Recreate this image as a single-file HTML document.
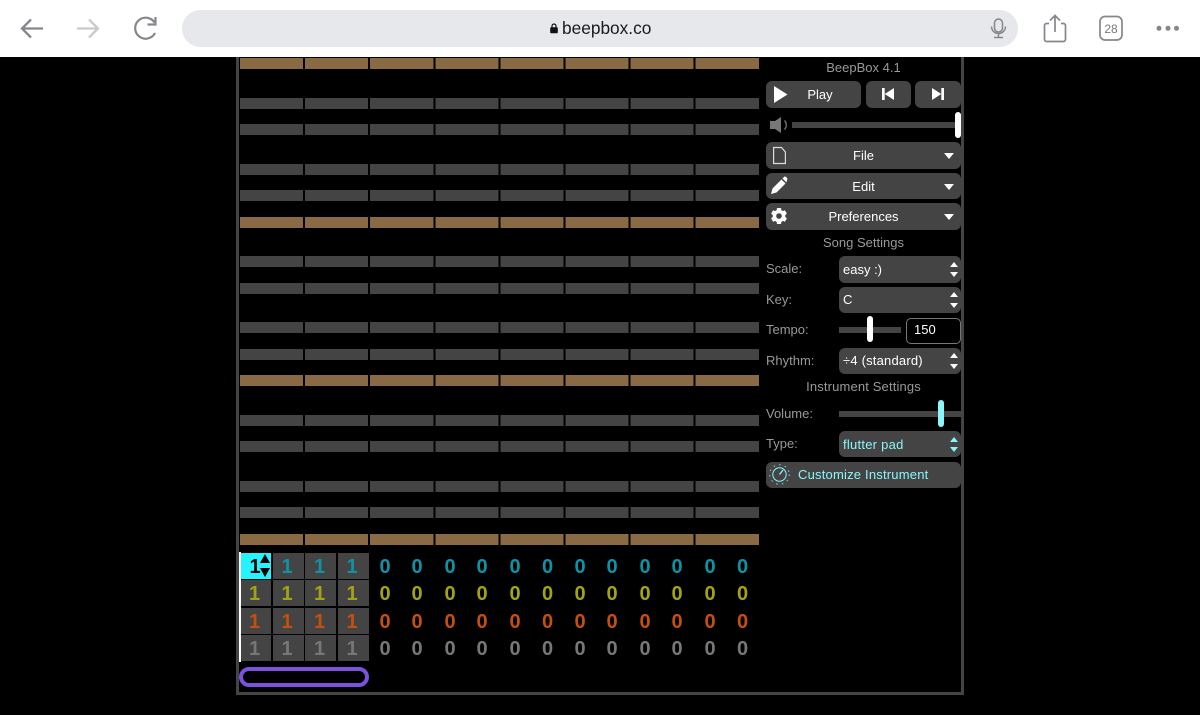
<!DOCTYPE html>
<html><head><meta charset="utf-8">
<style>
html,body{margin:0;padding:0;background:#000;width:1200px;height:715px;overflow:hidden}
body{position:relative;font-family:"Liberation Sans",sans-serif}
div,span,svg{position:absolute;box-sizing:border-box}
.r{left:240px;width:520px;height:11px;background:repeating-linear-gradient(90deg,#444 0 63.1px,#000 63.1px 65.1px)}
.b{background:repeating-linear-gradient(90deg,#8a6a45 0 63.1px,#000 63.1px 65.1px)}
.btn{background:#444;border-radius:6px;height:27px}
.t{color:#fff;font-size:13px;line-height:27px;white-space:nowrap}
.l{color:#999;font-size:13px;line-height:16px;white-space:nowrap}
.h{color:#999;font-size:13px;line-height:16px;text-align:center;left:766px;width:195px}
.tri{width:0;height:0;border-left:5px solid transparent;border-right:5px solid transparent;border-top:6px solid #fff;left:943.500px}
.up{width:0;height:0;border-left:4.500px solid transparent;border-right:4.500px solid transparent;border-bottom:5px solid #fff;left:949.500px}
.dn{width:0;height:0;border-left:4.500px solid transparent;border-right:4.500px solid transparent;border-top:5px solid #fff;left:949.500px}
.c{width:31px;height:26px;background:#444}
.n{width:32px;text-align:center;font-size:20px;font-weight:700;line-height:28px}
.tl{color:#1092a5}.yl{color:#a3a316}.or{color:#c4500f}.gy{color:#777}
</style></head>
<body>
<!-- browser bar -->
<div style="left:0;top:0;width:1200px;height:57px;background:#fff"></div>
<svg style="left:0;top:0" width="1200" height="57" fill="none">
<path d="M43 28.500H22M31 19.500L22 28.500L31 37.500" stroke="#85878b" stroke-width="2.300"/>
<path d="M77 28.500H98M89 19.500L98 28.500L89 37.500" stroke="#c9cacc" stroke-width="2.300"/>
<path d="M154.500 22.500A10.500 10.500 0 1 0 155 33" stroke="#85878b" stroke-width="2.200"/>
<path d="M147.500 24.500H155.500V17" stroke="#85878b" stroke-width="2.200"/>
</svg>
<div style="left:182px;top:10px;width:836px;height:37px;border-radius:18.500px;background:#e7e8ec"></div>
<svg style="left:550px;top:23px" width="8" height="11"><path d="M2 4.500V3a2 2 0 0 1 4 0V4.500" fill="none" stroke="#111" stroke-width="1.200"/><rect x="0.200" y="4.300" width="7.600" height="6" rx="1.100" fill="#111"/></svg>
<div style="left:562px;top:17px;font-size:17.300px;line-height:22px;color:#1a1a1c;white-space:nowrap">beepbox.co</div>
<svg style="left:980px;top:10px" width="210" height="37" fill="none">
<rect x="14.500" y="9" width="8" height="13" rx="4" stroke="#85878b" stroke-width="1.500"/>
<path d="M11.500 16.500a7 7 0 0 0 14 0M18.500 23.500V27M14 27.500H23" stroke="#85878b" stroke-width="1.500"/>
<path d="M69 13.500H66.500a2 2 0 0 0-2 2V29.500a2 2 0 0 0 2 2H83.500a2 2 0 0 0 2-2V15.500a2 2 0 0 0-2-2H81" stroke="#85878b" stroke-width="1.700"/>
<path d="M75 22V6M70 10.500L75 5.500L80 10.500" stroke="#85878b" stroke-width="1.700"/>
<rect x="120" y="6.500" width="22" height="23.500" rx="5" stroke="#85878b" stroke-width="1.700"/>
<circle cx="179" cy="18.300" r="2.500" fill="#85878b"/><circle cx="188" cy="18.300" r="2.500" fill="#85878b"/><circle cx="196.500" cy="18.300" r="2.500" fill="#85878b"/>
</svg>
<div style="left:1100px;top:21px;width:22px;text-align:center;font-size:12px;line-height:16px;color:#77797d">28</div>

<!-- frame -->
<div style="left:236px;top:57px;width:3px;height:638px;background:#444"></div>
<div style="left:961px;top:57px;width:3px;height:638px;background:#444"></div>
<div style="left:236px;top:692px;width:728px;height:3px;background:#444"></div>

<!-- piano roll -->
<div class="r b" style="top:58px"></div>
<div class="r" style="top:98px"></div>
<div class="r" style="top:124px"></div>
<div class="r" style="top:164px"></div>
<div class="r" style="top:190px"></div>
<div class="r b" style="top:217px"></div>
<div class="r" style="top:256px"></div>
<div class="r" style="top:283px"></div>
<div class="r" style="top:322px"></div>
<div class="r" style="top:349px"></div>
<div class="r b" style="top:375px"></div>
<div class="r" style="top:415px"></div>
<div class="r" style="top:441px"></div>
<div class="r" style="top:481px"></div>
<div class="r" style="top:507px"></div>
<div class="r b" style="top:534px"></div>

<!-- channel cells -->
<div style="left:239px;top:552px;width:2px;height:110px;background:#fff"></div>
<div class="c" style="left:241px;top:553px;width:30px;background:#25f3ff"></div><div class="c" style="left:272.500px;top:553px"></div><div class="c" style="left:305px;top:553px"></div><div class="c" style="left:337.500px;top:553px"></div>
<div class="c" style="left:241px;top:580px;width:30px"></div><div class="c" style="left:272.500px;top:580px"></div><div class="c" style="left:305px;top:580px"></div><div class="c" style="left:337.500px;top:580px"></div>
<div class="c" style="left:241px;top:608px;width:30px"></div><div class="c" style="left:272.500px;top:608px"></div><div class="c" style="left:305px;top:608px"></div><div class="c" style="left:337.500px;top:608px"></div>
<div class="c" style="left:241px;top:635px;width:30px"></div><div class="c" style="left:272.500px;top:635px"></div><div class="c" style="left:305px;top:635px"></div><div class="c" style="left:337.500px;top:635px"></div>

<div class="n" style="left:239px;top:553px;color:#000">1</div>
<div style="left:260px;top:554px;width:0;height:0;border-left:5.500px solid transparent;border-right:5.500px solid transparent;border-bottom:9px solid #000"></div>
<div style="left:260px;top:568px;width:0;height:0;border-left:5.500px solid transparent;border-right:5.500px solid transparent;border-top:9px solid #000"></div>

<div class="n tl" style="left:271px;top:553px">1</div><div class="n tl" style="left:303.500px;top:553px">1</div><div class="n tl" style="left:336px;top:553px">1</div>
<div class="n tl" style="left:369px;top:553px">0</div><div class="n tl" style="left:401px;top:553px">0</div><div class="n tl" style="left:434px;top:553px">0</div><div class="n tl" style="left:466px;top:553px">0</div><div class="n tl" style="left:499px;top:553px">0</div><div class="n tl" style="left:531.500px;top:553px">0</div><div class="n tl" style="left:564px;top:553px">0</div><div class="n tl" style="left:596px;top:553px">0</div><div class="n tl" style="left:629px;top:553px">0</div><div class="n tl" style="left:661px;top:553px">0</div><div class="n tl" style="left:694px;top:553px">0</div><div class="n tl" style="left:726.500px;top:553px">0</div>

<div class="n yl" style="left:238.500px;top:580px">1</div><div class="n yl" style="left:271px;top:580px">1</div><div class="n yl" style="left:303.500px;top:580px">1</div><div class="n yl" style="left:336px;top:580px">1</div>
<div class="n yl" style="left:369px;top:580px">0</div><div class="n yl" style="left:401px;top:580px">0</div><div class="n yl" style="left:434px;top:580px">0</div><div class="n yl" style="left:466px;top:580px">0</div><div class="n yl" style="left:499px;top:580px">0</div><div class="n yl" style="left:531.500px;top:580px">0</div><div class="n yl" style="left:564px;top:580px">0</div><div class="n yl" style="left:596px;top:580px">0</div><div class="n yl" style="left:629px;top:580px">0</div><div class="n yl" style="left:661px;top:580px">0</div><div class="n yl" style="left:694px;top:580px">0</div><div class="n yl" style="left:726.500px;top:580px">0</div>

<div class="n or" style="left:238.500px;top:608px">1</div><div class="n or" style="left:271px;top:608px">1</div><div class="n or" style="left:303.500px;top:608px">1</div><div class="n or" style="left:336px;top:608px">1</div>
<div class="n or" style="left:369px;top:608px">0</div><div class="n or" style="left:401px;top:608px">0</div><div class="n or" style="left:434px;top:608px">0</div><div class="n or" style="left:466px;top:608px">0</div><div class="n or" style="left:499px;top:608px">0</div><div class="n or" style="left:531.500px;top:608px">0</div><div class="n or" style="left:564px;top:608px">0</div><div class="n or" style="left:596px;top:608px">0</div><div class="n or" style="left:629px;top:608px">0</div><div class="n or" style="left:661px;top:608px">0</div><div class="n or" style="left:694px;top:608px">0</div><div class="n or" style="left:726.500px;top:608px">0</div>

<div class="n gy" style="left:238.500px;top:635px">1</div><div class="n gy" style="left:271px;top:635px">1</div><div class="n gy" style="left:303.500px;top:635px">1</div><div class="n gy" style="left:336px;top:635px">1</div>
<div class="n gy" style="left:369px;top:635px">0</div><div class="n gy" style="left:401px;top:635px">0</div><div class="n gy" style="left:434px;top:635px">0</div><div class="n gy" style="left:466px;top:635px">0</div><div class="n gy" style="left:499px;top:635px">0</div><div class="n gy" style="left:531.500px;top:635px">0</div><div class="n gy" style="left:564px;top:635px">0</div><div class="n gy" style="left:596px;top:635px">0</div><div class="n gy" style="left:629px;top:635px">0</div><div class="n gy" style="left:661px;top:635px">0</div><div class="n gy" style="left:694px;top:635px">0</div><div class="n gy" style="left:726.500px;top:635px">0</div>

<div style="left:239px;top:667px;width:130px;height:20px;border:4px solid #7a52dc;border-radius:10px"></div>

<!-- side panel -->
<div class="h" style="top:60px">BeepBox 4.1</div>
<div class="btn" style="left:766px;top:81px;width:95px"></div>
<div class="btn" style="left:866px;top:81px;width:45px"></div>
<div class="btn" style="left:915px;top:81px;width:46px"></div>
<svg style="left:766px;top:81px" width="196" height="27" fill="#fff">
<path d="M8 5L21.500 13.500L8 22Z"/>
<path d="M116 7h2.700v12H116ZM128 7v12L118.700 13Z"/>
<path d="M166 7L175.300 13L166 19ZM175.300 7H178V19H175.300Z"/>
</svg>
<div class="t" style="left:766px;top:81px;width:108px;text-align:center">Play</div>

<svg style="left:769px;top:116px" width="20" height="18" fill="none">
<path d="M1 5H6L12 1V17L6 13H1Z" fill="#777"/>
<path d="M15.500 4.500a6.500 6.500 0 0 1 0 9" stroke="#777" stroke-width="1.300"/>
</svg>
<div style="left:792px;top:122px;width:168px;height:6px;background:#444"></div>
<div style="left:955px;top:112px;width:6px;height:26px;border-radius:3px;background:#fff"></div>

<div class="btn" style="left:766px;top:142px;width:195px"></div>
<div class="btn" style="left:766px;top:173px;width:195px;height:26px"></div>
<div class="btn" style="left:766px;top:203px;width:195px"></div>
<svg style="left:766px;top:142px" width="30" height="90">
<path d="M7.600 5.500H15.500L19.400 10V21.500H7.600Z" fill="none" stroke="#ddd" stroke-width="1.200"/>
<path d="M5 52L6.500 46.500L15.500 37.500L19.500 41.500L10.500 50.500Z M16.500 36.500L18 35a1.500 1.500 0 0 1 2 0L21 36a1.500 1.500 0 0 1 0 2L20.500 40.500Z" fill="#fff"/>
<circle cx="13" cy="74" r="6.300" fill="#fff"/>
<g fill="#fff">
<rect x="10.800" y="66" width="4.400" height="16" rx="0.800"/>
<rect x="10.800" y="66" width="4.400" height="16" rx="0.800" transform="rotate(60 13 74)"/>
<rect x="10.800" y="66" width="4.400" height="16" rx="0.800" transform="rotate(120 13 74)"/>
</g>
<circle cx="13" cy="74" r="2.800" fill="#444"/>
</svg>
<div class="t" style="left:766px;top:142px;width:195px;text-align:center">File</div>
<div class="t" style="left:766px;top:173px;width:195px;text-align:center">Edit</div>
<div class="t" style="left:766px;top:203px;width:195px;text-align:center">Preferences</div>
<div class="tri" style="top:153px"></div>
<div class="tri" style="top:184px"></div>
<div class="tri" style="top:214px"></div>

<div class="h" style="top:235px">Song Settings</div>
<div class="l" style="left:766px;top:261px">Scale:</div>
<div class="btn" style="left:839px;top:256px;width:122px"></div>
<div class="t" style="left:843px;top:256px">easy :)</div>
<div class="up" style="top:262px"></div><div class="dn" style="top:272px"></div>

<div class="l" style="left:766px;top:292px">Key:</div>
<div class="btn" style="left:839px;top:287px;width:122px;height:26px"></div>
<div class="t" style="left:843px;top:286px">C</div>
<div class="up" style="top:292px"></div><div class="dn" style="top:303px"></div>

<div class="l" style="left:766px;top:322px">Tempo:</div>
<div style="left:839px;top:327px;width:62px;height:6px;background:#444"></div>
<div style="left:867px;top:316px;width:6px;height:26px;border-radius:3px;background:#fff"></div>
<div style="left:906px;top:318px;width:55px;height:26px;border:1px solid #777;border-radius:5px"></div>
<div class="t" style="left:914px;top:316px">150</div>

<div class="l" style="left:766px;top:353px">Rhythm:</div>
<div class="btn" style="left:839px;top:348px;width:122px;height:26px"></div>
<div class="t" style="left:843px;top:347px;letter-spacing:.2px">÷4 (standard)</div>
<div class="up" style="top:353px"></div><div class="dn" style="top:364px"></div>

<div class="h" style="top:379px;letter-spacing:.15px">Instrument Settings</div>
<div class="l" style="left:766px;top:406px">Volume:</div>
<div style="left:839px;top:411px;width:122px;height:6px;background:#444"></div>
<div style="left:938px;top:400px;width:6px;height:27px;border-radius:3px;background:#8af5fb"></div>

<div class="l" style="left:766px;top:436px">Type:</div>
<div class="btn" style="left:839px;top:431px;width:122px;height:26px"></div>
<div class="t" style="left:843px;top:431px;color:#8af5fb;letter-spacing:.25px">flutter pad</div>
<div class="up" style="top:437px;border-bottom-color:#8af5fb"></div><div class="dn" style="top:447px;border-top-color:#8af5fb"></div>

<div class="btn" style="left:766px;top:462px;width:195px;height:26px"></div>
<svg style="left:768px;top:464px" width="24" height="24" fill="none" stroke="#8af5fb" stroke-width="1">
<circle cx="11.500" cy="10.500" r="6.700"/>
<path d="M11.500 10.500L15 6" stroke-width="1.300"/>
<circle cx="11.500" cy="10.500" r="9.800" stroke-dasharray="1.500 4.200" opacity=".85"/>
</svg>
<div class="t" style="left:798px;top:461px;color:#8af5fb;letter-spacing:.2px">Customize Instrument</div>
</body></html>
